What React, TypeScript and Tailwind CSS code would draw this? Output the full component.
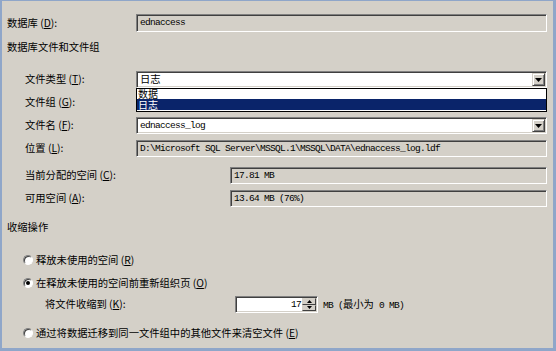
import React from "react";

const mono = "font-['Liberation_Mono',monospace] text-[9.5px] tracking-[-0.7px]";

function Label({ text, k, className = "" }: { text: string; k: string; className?: string }) {
  return (
    <span className={"whitespace-nowrap leading-none " + className}>
      {text} (<span className="underline">{k}</span>):
    </span>
  );
}

function Sunken({
  children,
  white = false,
  className = "",
}: {
  children?: React.ReactNode;
  white?: boolean;
  className?: string;
}) {
  return (
    <div
      className={
        "flex h-full items-center border border-t-[#808080] border-l-[#808080] border-b-white border-r-white shadow-[inset_1px_1px_0_#404040,inset_-1px_-1px_0_#d4d0c8] " +
        (white ? "bg-white " : "bg-[#d4d0c8] ") +
        className
      }
    >
      {children}
    </div>
  );
}

function Arrow() {
  return (
    <div className="mr-[1px] flex h-[13px] w-[13px] items-center justify-center border border-t-[#d4d0c8] border-l-[#d4d0c8] border-b-[#404040] border-r-[#404040] bg-[#d4d0c8] shadow-[inset_1px_1px_0_#fff,inset_-1px_-1px_0_#808080]">
      <svg width="7" height="4" viewBox="0 0 7 4">
        <path d="M0 0h7L3.5 4z" fill="#000" />
      </svg>
    </div>
  );
}

function Combo({ value, cjk = false }: { value: string; cjk?: boolean }) {
  return (
    <Sunken white className="justify-between">
      <span className={"pl-[3px] leading-none " + (cjk ? "" : mono)}>{value}</span>
      <Arrow />
    </Sunken>
  );
}

function Radio({ checked = false }: { checked?: boolean }) {
  return (
    <div className="flex h-[10px] w-[10px] items-center justify-center rounded-full border border-t-[#808080] border-l-[#808080] border-b-white border-r-white bg-white shadow-[inset_1px_1px_0_#404040]">
      {checked && <div className="h-[4px] w-[4px] rounded-full bg-black" />}
    </div>
  );
}

export default function App() {
  return (
    <div className="relative h-[351px] w-[556px] overflow-hidden border-t border-l-2 border-r-[3px] border-b-[3px] border-[#8fa6c9] bg-[#d4d0c8] pl-[5px] pr-[6px] font-['Noto_Sans_CJK_SC',sans-serif] text-[10.3px] text-black">
      <div className="mt-[13px] flex h-[18px] items-center">
        <Label text="数据库" k="D" className="w-[129px]" />
        <div className="h-full flex-1">
          <Sunken>
            <span className={"pl-[3px] leading-none " + mono}>ednaccess</span>
          </Sunken>
        </div>
      </div>

      <div className="mt-[8px] flex h-[14px] items-center leading-none">数据库文件和文件组</div>

      <div className="mt-[17px] flex h-[17px] items-center pl-[18px]">
        <Label text="文件类型" k="T" className="w-[111px]" />
        <div className="h-full flex-1">
          <Combo value="日志" cjk />
        </div>
      </div>

      <div className="mt-[6px] flex h-[17px] items-center pl-[18px]">
        <Label text="文件组" k="G" className="w-[111px]" />
        <div className="h-full flex-1">
          <Combo value="" />
        </div>
      </div>

      <div className="mt-[6px] flex h-[17px] items-center pl-[18px]">
        <Label text="文件名" k="F" className="w-[111px]" />
        <div className="h-full flex-1">
          <Combo value="ednaccess_log" />
        </div>
      </div>

      <div className="mt-[6px] flex h-[17px] items-center pl-[18px]">
        <Label text="位置" k="L" className="w-[111px]" />
        <div className="h-full flex-1">
          <Sunken>
            <span className={"pl-[3px] leading-none whitespace-nowrap " + mono}>
              D:\Microsoft SQL Server\MSSQL.1\MSSQL\DATA\ednaccess_log.ldf
            </span>
          </Sunken>
        </div>
      </div>

      <div className="mt-[10px] flex h-[17px] items-center pl-[18px]">
        <Label text="当前分配的空间" k="C" className="w-[205px]" />
        <div className="h-full flex-1">
          <Sunken>
            <span className={"pl-[3px] leading-none " + mono}>17.81 MB</span>
          </Sunken>
        </div>
      </div>

      <div className="mt-[6px] flex h-[17px] items-center pl-[18px]">
        <Label text="可用空间" k="A" className="w-[205px]" />
        <div className="h-full flex-1">
          <Sunken>
            <span className={"pl-[3px] leading-none " + mono}>13.64 MB (76%)</span>
          </Sunken>
        </div>
      </div>

      <div className="mt-[13px] flex h-[14px] items-center leading-none">收缩操作</div>

      <div className="mt-[19px] flex h-[14px] items-center gap-[3px] pl-[16px]">
        <Radio />
        <span className="whitespace-nowrap leading-none">
          释放未使用的空间 (<span className="underline">R</span>)
        </span>
      </div>

      <div className="mt-[9px] flex h-[14px] items-center gap-[3px] pl-[16px]">
        <Radio checked />
        <span className="whitespace-nowrap leading-none">
          在释放未使用的空间前重新组织页 (<span className="underline">O</span>)
        </span>
      </div>

      <div className="mt-[6px] flex h-[17px] items-center pl-[38px]">
        <Label text="将文件收缩到" k="K" className="w-[190px]" />
        <div className="h-full w-[83px]">
          <Sunken white className="justify-end">
            <span className={"pr-[1px] leading-none " + mono}>17</span>
            <div className="mr-[1px] flex h-[13px] w-[14px] flex-col">
              <div className="flex h-1/2 items-center justify-center border border-t-[#d4d0c8] border-l-[#d4d0c8] border-b-[#404040] border-r-[#404040] bg-[#d4d0c8]">
                <svg width="5" height="3" viewBox="0 0 5 3">
                  <path d="M2.5 0L5 3H0z" fill="#000" />
                </svg>
              </div>
              <div className="flex h-1/2 items-center justify-center border border-t-[#d4d0c8] border-l-[#d4d0c8] border-b-[#404040] border-r-[#404040] bg-[#d4d0c8]">
                <svg width="5" height="3" viewBox="0 0 5 3">
                  <path d="M0 0h5L2.5 3z" fill="#000" />
                </svg>
              </div>
            </div>
          </Sunken>
        </div>
        <span className={"ml-[5px] whitespace-nowrap leading-none " + mono}>
          MB (<span className="font-['Noto_Sans_CJK_SC',sans-serif] text-[10.3px] tracking-normal">最小为</span> 0 MB)
        </span>
      </div>

      <div className="mt-[13px] flex h-[14px] items-center gap-[3px] pl-[16px]">
        <Radio />
        <span className="whitespace-nowrap leading-none">
          通过将数据迁移到同一文件组中的其他文件来清空文件 (<span className="underline">E</span>)
        </span>
      </div>

      <div className="absolute left-[134px] top-[87px] h-[24px] w-[411px] border border-black bg-white text-[10px] leading-none">
        <div className="flex h-[10px] items-center pl-[1px]">数据</div>
        <div className="flex h-[11px] items-center bg-[#0a246a] pl-[1px] text-white">日志</div>
      </div>
    </div>
  );
}
